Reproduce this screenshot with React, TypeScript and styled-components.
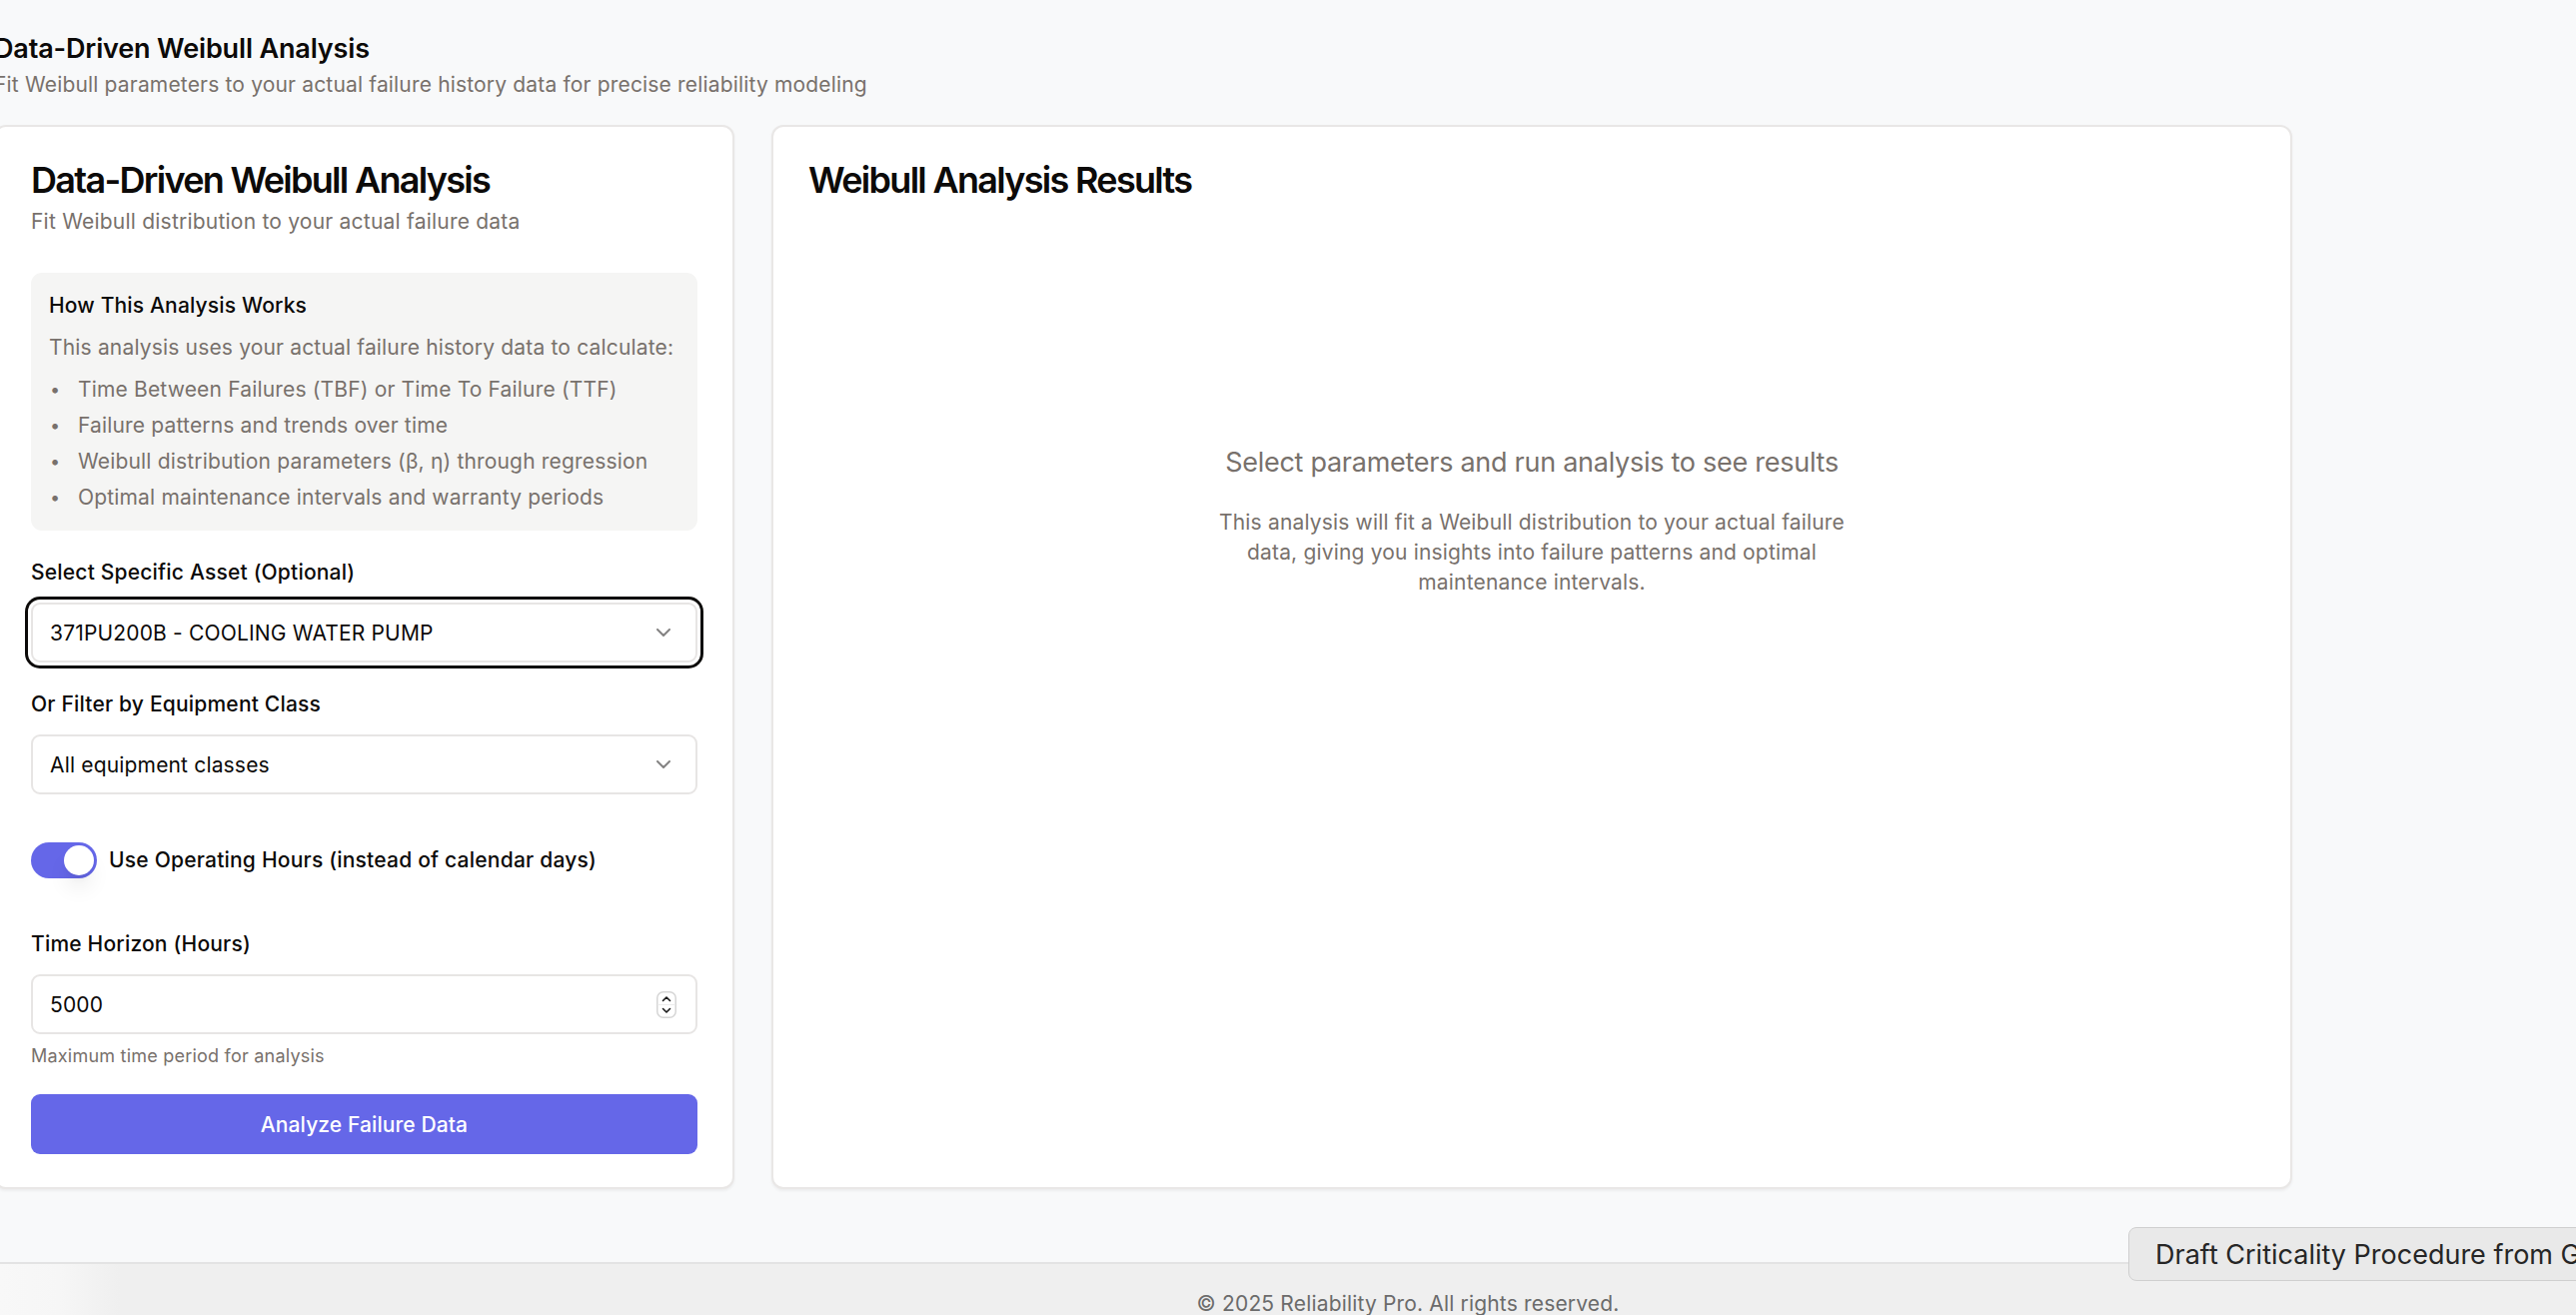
import React from 'react';
import styled, { createGlobalStyle } from 'styled-components';
import { ChevronDown } from 'lucide-react';

const GlobalStyle = createGlobalStyle`
  * { box-sizing: border-box; }
  html, body { margin: 0; padding: 0; }
  body {
    background: #f8f9fa;
    font-family: Inter, "Noto Sans", "Liberation Sans", sans-serif;
    color: #0c0a09;
    letter-spacing: 0.17px;
    overflow: hidden;
    -webkit-font-smoothing: antialiased;
  }
`;

const Page = styled.div`
  min-height: 1316px;
`;

const Main = styled.main`
  width: 2301px;
  margin-left: -6px;
  padding: 28px 0 73px;
`;

const PageTitle = styled.h1`
  margin: 0;
  font-size: 27px;
  line-height: 42px;
  font-weight: 600;
  letter-spacing: -0.15px;
  color: #0c0a09;
`;

const PageSubtitle = styled.p`
  margin: 0 0 25px;
  font-size: 21px;
  line-height: 30px;
  color: #78716c;
`;

const Grid = styled.div`
  display: grid;
  grid-template-columns: 741px 1522px;
  column-gap: 37px;
`;

const Card = styled.section`
  background: #ffffff;
  border: 2px solid #e9e7e6;
  border-radius: 12px;
  box-shadow: 0 1.5px 3px rgba(0, 0, 0, 0.05);
  display: flex;
  flex-direction: column;
`;

const CardHeader = styled.div`
  padding: 35px 35px 36px;
  display: flex;
  flex-direction: column;
  gap: 9px;
`;

const CardTitle = styled.h2`
  margin: 0;
  font-size: 36px;
  line-height: 36px;
  font-weight: 600;
  letter-spacing: -1.7px;
  color: #0c0a09;
`;

const CardDescription = styled.p`
  margin: 0;
  font-size: 21px;
  line-height: 30px;
  letter-spacing: 0.22px;
  color: #78716c;
`;

const CardContent = styled.div`
  padding: 0 35px 33px;
  display: flex;
  flex-direction: column;
  gap: 27px;
`;

const InfoBox = styled.div`
  background: #f5f5f4;
  border-radius: 11px;
  padding: 18px;
`;

const InfoHeading = styled.h4`
  margin: 0 0 12px;
  font-size: 21px;
  line-height: 30px;
  font-weight: 500;
  color: #0c0a09;
`;

const InfoText = styled.p`
  margin: 0 0 12px;
  font-size: 21px;
  line-height: 30px;
  color: #78716c;
`;

const InfoList = styled.ul`
  margin: 0;
  padding: 0;
  list-style: none;
  display: flex;
  flex-direction: column;
  gap: 6px;
`;

const InfoItem = styled.li`
  display: flex;
  font-size: 21px;
  line-height: 30px;
  color: #78716c;

  &::before {
    content: '•';
    flex: none;
    width: 28px;
    padding-left: 1px;
    font-size: 18px;
  }
`;

const Field = styled.div`
  display: flex;
  flex-direction: column;
`;

const Label = styled.label`
  display: block;
  margin-bottom: 15px;
  font-size: 21px;
  line-height: 30px;
  font-weight: 500;
  letter-spacing: 0.2px;
  color: #0c0a09;
`;

const SelectTrigger = styled.button<{ $focused?: boolean }>`
  height: 60px;
  width: 100%;
  display: flex;
  align-items: center;
  justify-content: space-between;
  padding: 0 20px 0 17px;
  background: #ffffff;
  border: 2px solid #e7e5e4;
  border-radius: 9px;
  font-family: inherit;
  font-size: 21px;
  letter-spacing: 0.17px;
  color: #0c0a09;
  text-align: left;
  box-shadow: ${(p) => (p.$focused ? '0 0 0 3px #ffffff, 0 0 0 6px #0c0a09' : 'none')};

  svg {
    flex: none;
    opacity: 0.5;
  }
`;

const SwitchRow = styled.div`
  display: flex;
  align-items: center;
  gap: 12px;
  padding: 21px 0 24px;
`;

const Switch = styled.button<{ $on: boolean }>`
  flex: none;
  width: 66px;
  height: 36px;
  padding: 0;
  border: 3px solid transparent;
  border-radius: 999px;
  background: ${(p) => (p.$on ? '#6567e8' : '#e7e5e4')};
  display: flex;
  align-items: center;
  justify-content: ${(p) => (p.$on ? 'flex-end' : 'flex-start')};
`;

const SwitchThumb = styled.span`
  width: 30px;
  height: 30px;
  border-radius: 50%;
  background: #ffffff;
  box-shadow: 0 15px 22px -4px rgba(0, 0, 0, 0.1), 0 6px 9px -5px rgba(0, 0, 0, 0.1);
`;

const SwitchLabel = styled.span`
  font-size: 21px;
  line-height: 30px;
  font-weight: 500;
  letter-spacing: 0.22px;
  color: #0c0a09;
`;

const NumberBox = styled.div`
  height: 60px;
  display: flex;
  align-items: center;
  padding: 0 19px 0 17px;
  border: 2px solid #e7e5e4;
  border-radius: 9px;
  background: #ffffff;
`;

const NumberInput = styled.input`
  flex: 1;
  min-width: 0;
  border: none;
  outline: none;
  padding: 0;
  background: transparent;
  font-family: inherit;
  font-size: 21px;
  letter-spacing: 0.17px;
  color: #0c0a09;
`;

const Hint = styled.p`
  margin: 10px 0 0;
  font-size: 18px;
  line-height: 24px;
  letter-spacing: 0.22px;
  color: #78716c;
`;

const PrimaryButton = styled.button`
  height: 60px;
  width: 100%;
  margin-top: -1px;
  border: none;
  border-radius: 9px;
  background: #6567e8;
  color: #ffffff;
  font-family: inherit;
  font-size: 21px;
  font-weight: 500;
  letter-spacing: 0.1px;
`;

const EmptyState = styled.div`
  margin-top: 208px;
  padding: 0 35px;
  text-align: center;
`;

const EmptyTitle = styled.p`
  margin: 0 0 24px;
  font-size: 27px;
  line-height: 42px;
  letter-spacing: -0.27px;
  color: #78716c;
`;

const EmptyText = styled.p`
  margin: 0 auto;
  max-width: 672px;
  font-size: 21px;
  line-height: 30px;
  color: #78716c;
`;

const Footer = styled.footer`
  border-top: 2px solid #e3e3e3;
  background: linear-gradient(90deg, #f8f8f8 0px, #f6f6f6 60px, #efefef 120px);
  padding: 25px 0 22px 240px;
  text-align: center;
`;

const FooterText = styled.p`
  margin: 0;
  font-size: 21px;
  line-height: 30px;
  color: #6b6b6b;
`;

const FloatingChip = styled.div`
  position: fixed;
  left: 2130px;
  top: 1228px;
  height: 54px;
  display: flex;
  align-items: center;
  padding: 0 28px 0 26px;
  background: #e9e9e9;
  border: 1.5px solid #cfcfcf;
  border-radius: 8px;
  font-size: 27px;
  letter-spacing: 0;
  color: #262626;
  white-space: nowrap;
`;

function Stepper() {
  return (
    <svg width="20" height="27" viewBox="0 0 20 27" fill="none">
      <rect x="0.75" y="0.75" width="18.5" height="25.5" rx="6" fill="#fff" stroke="#d6d6d6" strokeWidth="1.5" />
      <line x1="1" y1="13.5" x2="19" y2="13.5" stroke="#ececec" strokeWidth="1" />
      <path d="M6.5 9.5 10 6l3.5 3.5" stroke="#1a1a1a" strokeWidth="1.6" strokeLinecap="round" strokeLinejoin="round" />
      <path d="M6.5 17.5 10 21l3.5-3.5" stroke="#1a1a1a" strokeWidth="1.6" strokeLinecap="round" strokeLinejoin="round" />
    </svg>
  );
}

const bullets = [
  'Time Between Failures (TBF) or Time To Failure (TTF)',
  'Failure patterns and trends over time',
  'Weibull distribution parameters (β, η) through regression',
  'Optimal maintenance intervals and warranty periods',
];

export default function App() {
  return (
    <Page>
      <GlobalStyle />
      <Main>
        <PageTitle>Data-Driven Weibull Analysis</PageTitle>
        <PageSubtitle>
          Fit Weibull parameters to your actual failure history data for precise reliability modeling
        </PageSubtitle>

        <Grid>
          <Card>
            <CardHeader>
              <CardTitle>Data-Driven Weibull Analysis</CardTitle>
              <CardDescription>Fit Weibull distribution to your actual failure data</CardDescription>
            </CardHeader>
            <CardContent>
              <InfoBox>
                <InfoHeading>How This Analysis Works</InfoHeading>
                <InfoText>This analysis uses your actual failure history data to calculate:</InfoText>
                <InfoList>
                  {bullets.map((b) => (
                    <InfoItem key={b}>{b}</InfoItem>
                  ))}
                </InfoList>
              </InfoBox>

              <Field>
                <Label>Select Specific Asset (Optional)</Label>
                <SelectTrigger $focused>
                  <span>371PU200B - COOLING WATER PUMP</span>
                  <ChevronDown size={24} strokeWidth={2} />
                </SelectTrigger>
              </Field>

              <Field>
                <Label>Or Filter by Equipment Class</Label>
                <SelectTrigger>
                  <span>All equipment classes</span>
                  <ChevronDown size={24} strokeWidth={2} />
                </SelectTrigger>
              </Field>

              <SwitchRow>
                <Switch $on>
                  <SwitchThumb />
                </Switch>
                <SwitchLabel>Use Operating Hours (instead of calendar days)</SwitchLabel>
              </SwitchRow>

              <Field>
                <Label>Time Horizon (Hours)</Label>
                <NumberBox>
                  <NumberInput type="text" defaultValue="5000" />
                  <Stepper />
                </NumberBox>
                <Hint>Maximum time period for analysis</Hint>
              </Field>

              <PrimaryButton>Analyze Failure Data</PrimaryButton>
            </CardContent>
          </Card>

          <Card>
            <CardHeader>
              <CardTitle>Weibull Analysis Results</CardTitle>
            </CardHeader>
            <EmptyState>
              <EmptyTitle>Select parameters and run analysis to see results</EmptyTitle>
              <EmptyText>
                This analysis will fit a Weibull distribution to your actual failure data, giving you
                insights into failure patterns and optimal maintenance intervals.
              </EmptyText>
            </EmptyState>
          </Card>
        </Grid>
      </Main>

      <Footer>
        <FooterText>© 2025 Reliability Pro. All rights reserved.</FooterText>
      </Footer>

      <FloatingChip>Draft Criticality Procedure from Gemini</FloatingChip>
    </Page>
  );
}
